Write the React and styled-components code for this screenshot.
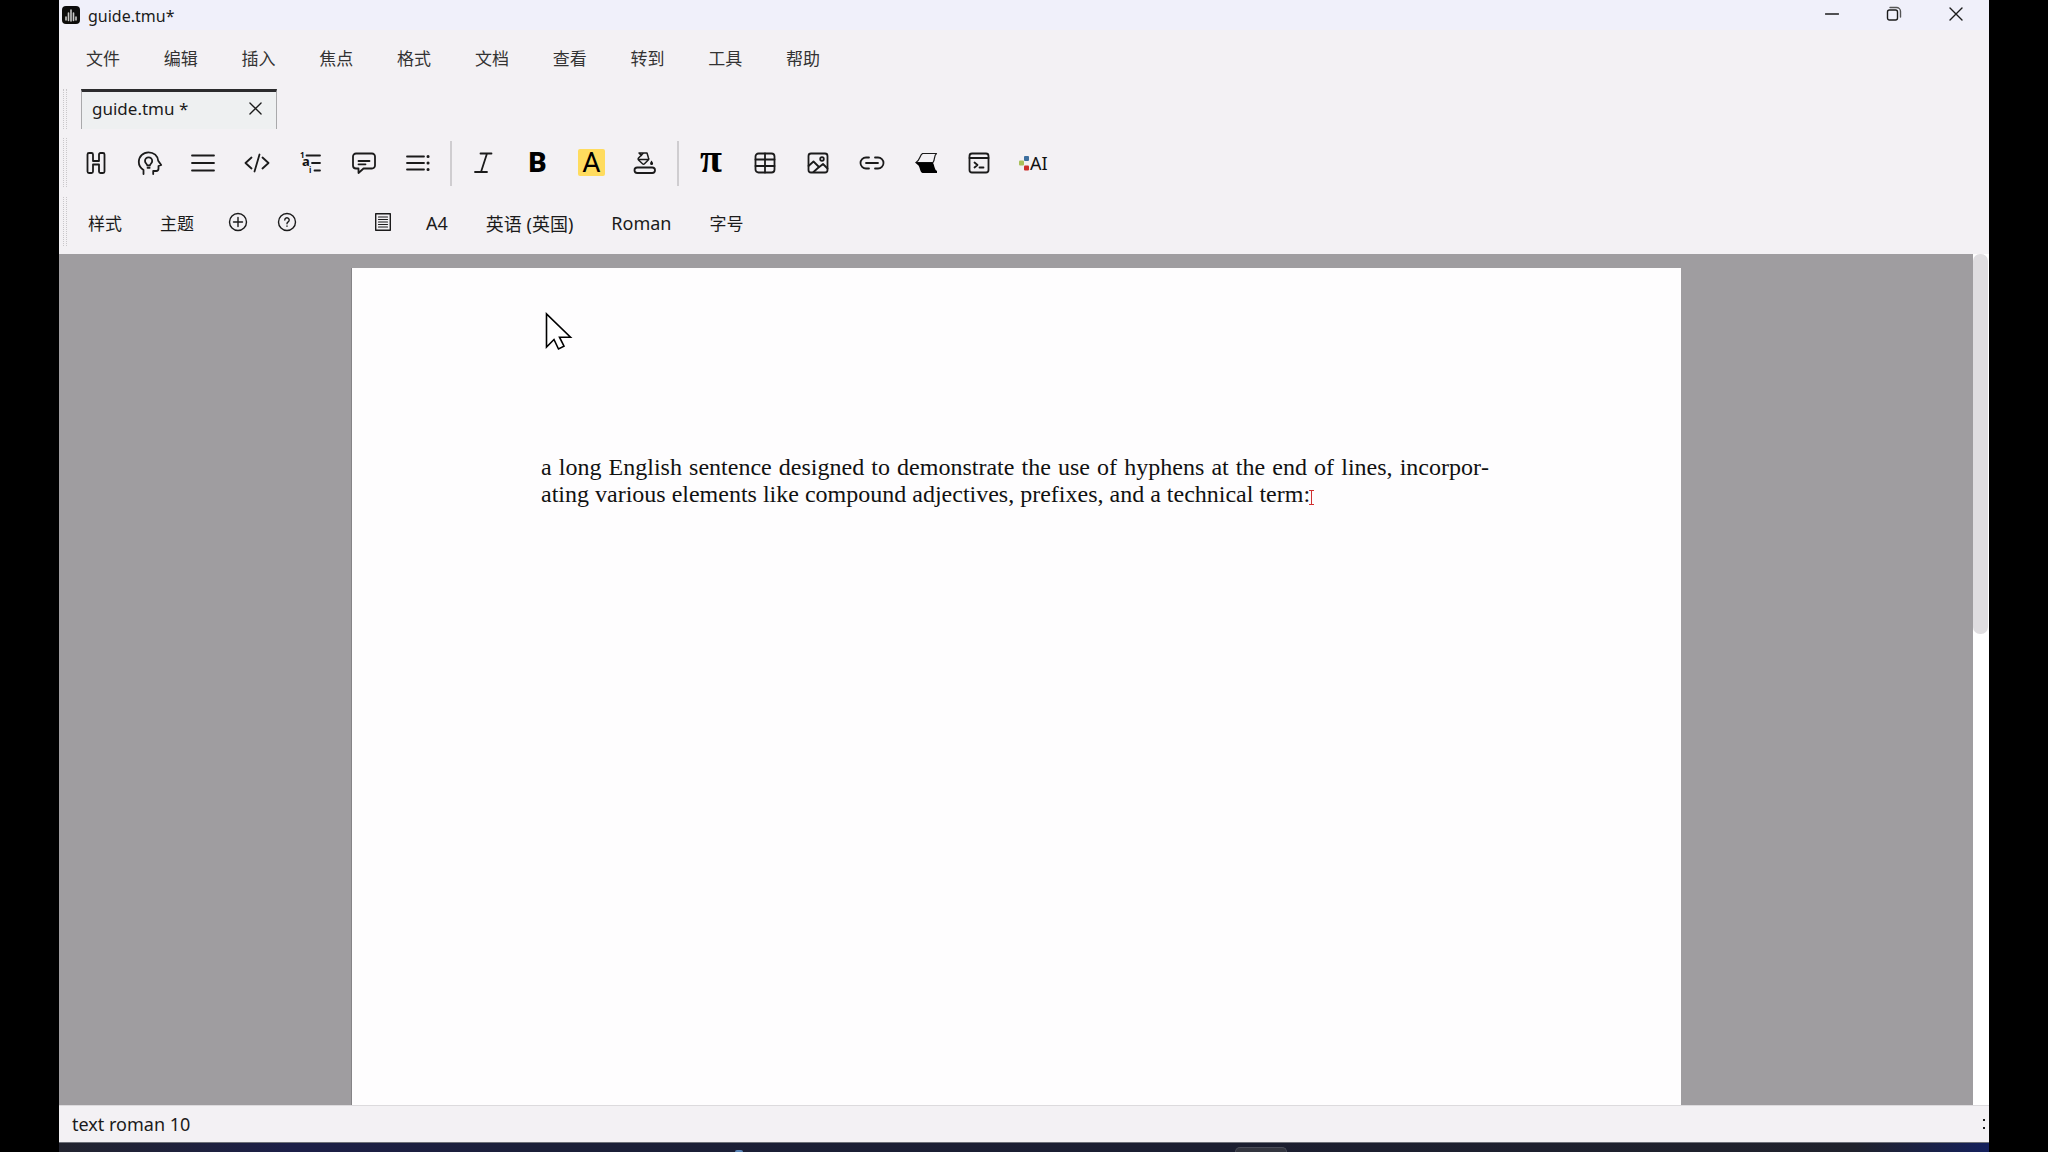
import { createGlobalStyle, styled } from "styled-components";

const menus = ["文件", "编辑", "插入", "焦点", "格式", "文档", "查看", "转到", "工具", "帮助"];

const LogoIcon = () => (
    <Icon width="18" height="18" viewBox="0 0 18 18">
        <rect width="18" height="18" rx="4" fill="#0c0c0c" stroke="none" />
        <path d="M4 14v-3M6.500 14.500V7M9 15V4M11.500 14.500V7M14 14v-3" stroke="#c8c8c8" strokeWidth="1.600" />
    </Icon>
)

const MinimizeIcon = () => (
    <Icon width="14" height="14" viewBox="0 0 14 14"><path d="M.5 7h13" /></Icon>
)

const RestoreIcon = () => (
    <Icon width="16" height="16" viewBox="0 0 16 16">
        <rect x="1.5" y="4" width="10" height="10" rx="2" />
        <path d="M4 1.5h6.500a4 4 0 0 1 4 4V11" stroke="#555" />
    </Icon>
)

const CloseIcon = ({ size = 14 }) => (
    <Icon width={size} height={size} viewBox="0 0 14 14"><path d="M1 1l12 12M13 1L1 13" /></Icon>
)

const SectionIcon = () => (
    <ToolIcon>
        <path d="M7 4h2.500a1.500 1.500 0 0 1 1.500 1.500V12h6V5.500A1.500 1.500 0 0 1 18.500 4H21a1.500 1.500 0 0 1 1.500 1.500v17A1.500 1.500 0 0 1 21 24h-2.500a1.500 1.500 0 0 1-1.500-1.500V15.500h-6v7A1.500 1.500 0 0 1 9.500 24H7a1.500 1.500 0 0 1-1.500-1.500v-17A1.500 1.500 0 0 1 7 4z" />
    </ToolIcon>
)

const IdeaIcon = () => (
    <ToolIcon>
        <path d="M7.500 25v-4C4.500 19 2.800 16.200 2.800 13 2.800 7.500 7 3.300 12.500 3.300c5.400 0 9.300 3.500 9.700 8.500l3 4.200-2.700 1v2.500c0 1.600-.8 2.500-2.300 2.500h-3v3" />
        <path d="M11.300 16.500c0-1.500-2.300-2.200-2.300-4.500a3.600 3.600 0 0 1 7.200 0c0 2.300-2.300 3-2.300 4.500zM11.500 18.800h2.200" />
    </ToolIcon>
)

const LinesIcon = () => (
    <ToolIcon><path d="M3 6.500h22M3 14h22M3 21.500h22" /></ToolIcon>
)

const CodeIcon = () => (
    <ToolIcon><path d="M8.500 8.500L2.500 14l6 5.500M19.500 8.500l6 5.500-6 5.500M16.500 5.500l-5 17" /></ToolIcon>
)

const OutlineIcon = () => (
    <ToolIcon>
        <path d="M9.500 6.500H23M15 14h8M17.500 21.500H23" />
        <text x="3" y="9" fontSize="8" fontWeight="700">1</text>
        <text x="5" y="17" fontSize="13" fontWeight="700">a</text>
        <text x="12" y="24" fontSize="8" fontWeight="700">i</text>
    </ToolIcon>
)

const CommentIcon = () => (
    <ToolIcon>
        <path d="M6 4.500h16a3 3 0 0 1 3 3v9a3 3 0 0 1-3 3h-8.500L8.500 24v-4.500H6a3 3 0 0 1-3-3v-9a3 3 0 0 1 3-3zM8.500 12h11M8.500 15.300h7" />
    </ToolIcon>
)

const ListIcon = () => (
    <ToolIcon>
        <path d="M3 7.500h17M3 14h17M3 20.500h17" />
        <path d="M24 7.500h.1M24 14h.1M24 20.500h.1" strokeWidth="3" />
    </ToolIcon>
)

const ItalicIcon = () => (
    <ToolIcon><path d="M10.500 4.500h11M5 23h12M17 4.500L11 23" /></ToolIcon>
)

const FillIcon = () => (
    <ToolIcon>
        <rect x="3.500" y="18.500" width="20.500" height="5.500" rx="2.700" />
        <path d="M8.500 4l7.500 0 1.500 5c.5.600.5 1.200 0 1.700l-4 4c-.6.600-1.400.6-2 0L7.500 11c-.6-.6-.6-1.300 0-2l5-5M7.500 10.500h9.500M8 4l2.500 2.500" strokeWidth="1.500" />
        <path d="M20.500 11.500c1 1.500 1.600 2.200 1.600 3a1.500 1.500 0 0 1-3 0c0-.8.500-1.500 1.400-3z" fill="#111" stroke="none" />
    </ToolIcon>
)

const TableIcon = () => (
    <ToolIcon>
        <rect x="4.500" y="4.500" width="19" height="19" rx="3" />
        <path d="M14 4.500v19M4.500 10.500h19M4.500 17h19" />
    </ToolIcon>
)

const PictureIcon = () => (
    <ToolIcon>
        <rect x="4.500" y="4.500" width="19" height="19" rx="2.500" />
        <circle cx="18" cy="10" r="1.800" />
        <path d="M4.500 17l5-4.500 5.500 5.500-5.500 5M14 19l5-4 4.500 4.500" />
    </ToolIcon>
)

const LinkIcon = () => (
    <ToolIcon>
        <path d="M11 8.500H8A5.500 5.500 0 0 0 8 19.500h3M17 8.500h3a5.500 5.500 0 0 1 0 11h-3M8 14h12" />
    </ToolIcon>
)

const EraserIcon = () => (
    <ToolIcon>
        <path d="M10.500 4.500H24.500C21.500 7 23.500 10 21 13.500H4C8 11.500 7.500 6.500 10.500 4.500z" strokeWidth="1.200" />
        <path d="M3 13.500H20.500c1.500 1 1.500 3.500 2.500 6 .5 1.500 1.200 2 2 2.500V24H10.500c-2.500-1-2-4-4-7.500z" fill="#000" stroke="none" />
    </ToolIcon>
)

const TerminalIcon = () => (
    <ToolIcon>
        <rect x="4.500" y="4.500" width="19" height="19" rx="2.500" />
        <path d="M4.500 9h19M9.500 13.500l3 2.500-3 2.500M14.500 18.500h4" />
    </ToolIcon>
)

const AiIcon = () => (
    <ToolIcon>
        <rect x="5" y="7" width="5" height="5" rx="1" fill="#3d6f9f" stroke="none" />
        <rect x="0" y="11.500" width="5" height="5" rx="1" fill="#a9c05a" stroke="none" />
        <rect x="5" y="16.500" width="5" height="5" rx="1" fill="#cc2f2b" stroke="none" />
        <text x="11" y="21" fontSize="18">AI</text>
    </ToolIcon>
)

const PlusIcon = () => (
    <Icon width="20" height="20" viewBox="0 0 20 20">
        <circle cx="10" cy="10" r="8.500" /><path d="M10 5.500v9M5.500 10h9" />
    </Icon>
)

const HelpIcon = () => (
    <Icon width="20" height="20" viewBox="0 0 20 20">
        <circle cx="10" cy="10" r="8.500" />
        <path d="M7.800 8a2.200 2.200 0 1 1 3.400 1.800c-.8.500-1.200.9-1.200 1.900M10 14v.3" />
    </Icon>
)

const PageIcon = () => (
    <Icon width="20" height="20" viewBox="0 0 20 20">
        <rect x="2.700" y="1.700" width="14.600" height="16.600" />
        <path d="M5.500 5h9M5.500 7.500h9M5.500 10h9M5.500 12.500h9M5.500 15h9" strokeWidth="1.200" />
    </Icon>
)

const insertTools = [
    ["章节", SectionIcon], ["定理", IdeaIcon], ["段落", LinesIcon], ["程序", CodeIcon],
    ["列表", OutlineIcon], ["注释", CommentIcon], ["描述", ListIcon],
];

const objectTools = [
    ["表格", TableIcon], ["图片", PictureIcon], ["链接", LinkIcon],
    ["折叠", EraserIcon], ["会话", TerminalIcon], ["AI", AiIcon],
];

export default function App() {
    return (
        <>
            <GlobalStyle />
            <Window>
                <TitleBar>
                    <LogoIcon />
                    <h1>guide.tmu*</h1>
                    <WindowButton aria-label="最小化"><MinimizeIcon /></WindowButton>
                    <WindowButton aria-label="还原"><RestoreIcon /></WindowButton>
                    <WindowButton aria-label="关闭"><CloseIcon /></WindowButton>
                </TitleBar>
                <MenuBar>
                    {menus.map((name) => <MenuButton key={name}>{name}</MenuButton>)}
                </MenuBar>
                <TabRow>
                    <Handle />
                    <Tab>
                        <button>guide.tmu *</button>
                        <button aria-label="关闭标签"><CloseIcon size={13} /></button>
                    </Tab>
                </TabRow>
                <ToolRow>
                    <Handle />
                    <ToolGroup $count={7}>
                        {insertTools.map(([label, Glyph]) => (
                            <ToolButton key={label} aria-label={label}><Glyph /></ToolButton>
                        ))}
                    </ToolGroup>
                    <Separator />
                    <ToolGroup $count={4}>
                        <ToolButton aria-label="斜体"><ItalicIcon /></ToolButton>
                        <ToolButton aria-label="粗体"><Letter $weight={900}>B</Letter></ToolButton>
                        <ToolButton aria-label="高亮"><Letter $marked>A</Letter></ToolButton>
                        <ToolButton aria-label="填充"><FillIcon /></ToolButton>
                    </ToolGroup>
                    <Separator />
                    <ToolGroup $count={7}>
                        <ToolButton aria-label="数学"><Letter $math $weight={700}>π</Letter></ToolButton>
                        {objectTools.map(([label, Glyph]) => (
                            <ToolButton key={label} aria-label={label}><Glyph /></ToolButton>
                        ))}
                    </ToolGroup>
                </ToolRow>
                <StyleRow>
                    <Handle />
                    <TextButton>样式</TextButton>
                    <TextButton>主题</TextButton>
                    <SmallButton aria-label="添加"><PlusIcon /></SmallButton>
                    <SmallButton aria-label="帮助"><HelpIcon /></SmallButton>
                    <Gap />
                    <SmallButton aria-label="页面"><PageIcon /></SmallButton>
                    <TextButton $large>A4</TextButton>
                    <TextButton $large>英语 (英国)</TextButton>
                    <TextButton $large>Roman</TextButton>
                    <TextButton>字号</TextButton>
                </StyleRow>
                <Workspace>
                    <Canvas>
                        <Page>
                            <p>
                                a long English sentence designed to demonstrate the use of hyphens at the end of lines,
                                incorpor&shy;ating various elements like compound adjectives, prefixes, and a technical term:<Caret width="5" height="15" viewBox="0 0 5 15">
                                    <path d="M0 .5h5M0 14.500h5M2.500 1v13" />
                                </Caret>
                            </p>
                            <Pointer width="28" height="40" viewBox="0 0 28 40">
                                <path d="M1.500 2v33l7.500-7.500 4.500 9.500 5.500-2.800-4.500-9H25.500z" />
                            </Pointer>
                        </Page>
                    </Canvas>
                    <ScrollTrack><ScrollThumb /></ScrollTrack>
                </Workspace>
                <StatusBar>
                    <span>text roman 10</span>
                    <Grip />
                </StatusBar>
                <Taskbar>
                    <TaskDot />
                    <TaskItem />
                </Taskbar>
            </Window>
        </>
    )
}

const GlobalStyle = createGlobalStyle`
    * {
        box-sizing: border-box;
    }

    body {
        margin: 0;
        background-color: #000000;
        font-family: 'Noto Sans', 'Noto Sans CJK SC', sans-serif;
        font-size: 17px;
        color: #1b1b1b;
    }

    button {
        display: flex;
        align-items: center;
        justify-content: center;
        padding: 0;
        border: none;
        background: none;
        font: inherit;
        color: inherit;
        white-space: nowrap;
    }
`

const Icon = styled.svg`
    flex: none;
    fill: none;
    stroke: #1b1b1b;
    stroke-width: 1.4;
    stroke-linecap: round;
    stroke-linejoin: round;
`

const ToolIcon = styled(Icon).attrs({ width: 28, height: 28, viewBox: "0 0 28 28" })`
    overflow: visible;
    stroke-width: 1.8;

    text {
        fill: #111111;
        stroke: none;
    }
`

const Window = styled.div`
    height: 100vh;
    margin: 0 59px;
    display: flex;
    flex-direction: column;
    background-color: #f3f1f4;
`

const TitleBar = styled.header`
    height: 30px;
    display: flex;
    align-items: center;
    padding: 0 2px 0 3px;
    background-color: #f0f0fa;

    h1 {
        flex: 1;
        margin: 0 0 0 8px;
        padding-top: 2px;
        font-size: 16px;
        font-weight: 400;
    }
`

const WindowButton = styled.button`
    width: 62px;
    height: 28px;
    align-self: flex-start;
`

const MenuBar = styled.nav`
    width: 778px;
    height: 57px;
    margin-left: 5px;
    padding-bottom: 2px;
    display: grid;
    grid-template-columns: repeat(10, 1fr);
`

const MenuButton = styled.button`
    color: #333333;
`

const Row = styled.div`
    display: flex;
    padding-left: 4px;
`

const TabRow = styled(Row)`
    height: 47px;
    padding-top: 2px;
    padding-bottom: 5px;
`

const ToolRow = styled(Row)`
    height: 59px;
    padding-top: 4px;
    padding-bottom: 6px;
`

const StyleRow = styled(Row)`
    height: 61px;
    padding-top: 4px;
    padding-bottom: 8px;
`

const Handle = styled.div`
    width: 4px;
    margin-right: 2px;
    border: dotted #c9c7ca;
    border-width: 0 1px;
`

const Tab = styled.div`
    width: 196px;
    margin-left: 12px;
    padding: 0 14px 5px 10px;
    display: flex;
    justify-content: space-between;
    border: 1px solid #a9a9ab;
    border-top: 3px solid #2b2b2d;
    border-bottom: none;
    background-color: #eef0f1;
`

const ToolGroup = styled.div`
    width: ${({ $count }) => ($count === 4 ? 215 : 376)}px;
    display: grid;
    grid-template-columns: repeat(${({ $count }) => $count}, 1fr);
`

const ToolButton = styled.button`
    height: 100%;
`

const Letter = styled.span`
    width: 27px;
    height: 27px;
    border-radius: 2px;
    background-color: ${({ $marked }) => ($marked ? "#ffdc5e" : "transparent")};
    font-family: ${({ $math }) => ($math ? "'Liberation Serif', serif" : "Roboto, sans-serif")};
    font-size: ${({ $math }) => ($math ? 40 : 28)}px;
    font-weight: ${({ $weight }) => $weight || 400};
    line-height: ${({ $math }) => ($math ? 20 : 28)}px;
    color: #000000;
`

const Separator = styled.div`
    width: 2px;
    margin: 3px 5px 1px;
    background-color: #cfcdd0;
`

const TextButton = styled.button`
    padding: 2px 19px 0;
    font-size: ${({ $large }) => ($large ? 18 : 17)}px;
`

const SmallButton = styled.button`
    width: 49px;
`

const Gap = styled.div`
    width: 47px;
`

const Workspace = styled.main`
    flex: 1;
    min-height: 0;
    display: flex;
`

const Canvas = styled.div`
    flex: 1;
    display: flex;
    justify-content: center;
    padding-top: 14px;
    overflow: hidden;
    background-color: #9f9da0;
`

const Page = styled.article`
    position: relative;
    width: 1330px;
    padding: 186px 192px 0 189px;
    background-color: #fefdfe;
    border: solid #858386;
    border-width: 0 0 0 1px;

    p {
        margin: 0;
        font-family: 'Liberation Serif', serif;
        font-size: 24px;
        line-height: 27px;
        text-align: justify;
        color: #111111;
    }
`

const Caret = styled.svg`
    margin-left: -1px;
    vertical-align: -3px;
    stroke: #d03030;
`

const Pointer = styled.svg`
    position: absolute;
    left: 193px;
    top: 44px;
    fill: #ffffff;
    stroke: #000000;
    stroke-width: 1.6;
`

const ScrollTrack = styled.div`
    width: 16px;
    padding-right: 1px;
    background-color: #ffffff;
`

const ScrollThumb = styled.div`
    height: 380px;
    border-radius: 7px;
    background-color: #dfdde0;
`

const StatusBar = styled.footer`
    height: 37px;
    display: flex;
    align-items: center;
    justify-content: space-between;
    padding: 0 4px 0 13px;
    border-top: 1px solid #dcdadd;
    font-size: 18px;
`

const Grip = styled.div`
    width: 2px;
    height: 10px;
    border: solid #1b1b1b;
    border-width: 2px 0;
`

const Taskbar = styled.div`
    height: 10px;
    display: flex;
    align-items: flex-end;
    border-top: 1px solid #6d7078;
    background: linear-gradient(90deg, #22242f 0%, #1c1f48 12%, #1b1f38 25%, #1b1e30 60%, #20222c 93%, #14205c 100%);
`

const TaskDot = styled.div`
    width: 8px;
    height: 2px;
    margin-left: 35%;
    border-radius: 2px 2px 0 0;
    background-color: #5c86b8;
`

const TaskItem = styled.div`
    width: 52px;
    height: 5px;
    margin-left: 492px;
    border: 1px solid #4a4c58;
    border-bottom: none;
    border-radius: 5px 5px 0 0;
    background-color: #33353f;
`
